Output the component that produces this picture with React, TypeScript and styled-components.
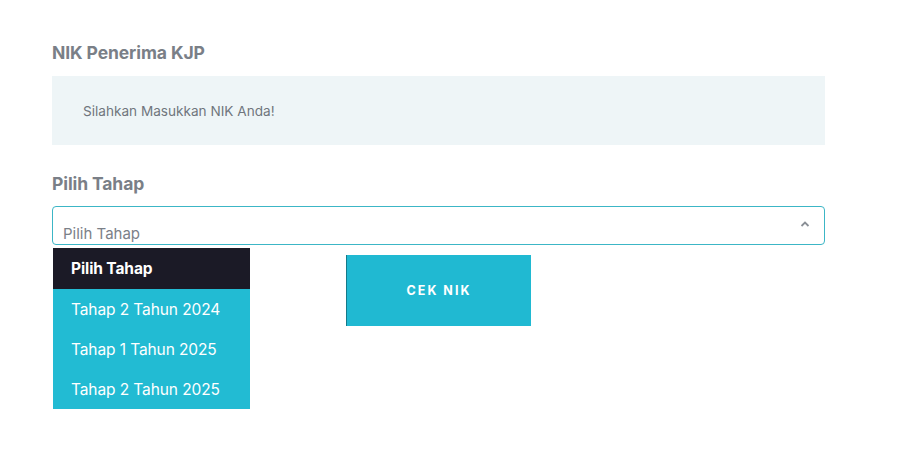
import React from "react";
import styled, { createGlobalStyle } from "styled-components";

const Global = createGlobalStyle`
  html, body { margin: 0; padding: 0; background: #ffffff; }
  body { font-family: Inter, "Open Sans", sans-serif; }
`;

const Page = styled.div`
  padding: 42px 0 0 52px;
  width: 825px;
  min-height: 449px;
  box-sizing: border-box;
`;

const Label = styled.div`
  font-size: 17.5px;
  font-weight: 700;
  color: #7a7f87;
  line-height: 21px;
  letter-spacing: -0.1px;
`;

const NikBox = styled.div`
  margin-top: 13px;
  height: 69px;
  background: #eef5f7;
  display: flex;
  align-items: center;
  padding-left: 31px;
  font-size: 13.6px;
  color: #70757d;
`;

const Section = styled.div`
  margin-top: 28px;
`;

const SelectWrap = styled.div`
  position: relative;
  z-index: 2;
  margin-top: 12px;
`;

const SelectBox = styled.div`
  height: 37px;
  border: 1px solid #3cb6c6;
  border-radius: 4px;
  box-sizing: content-box;
  display: flex;
  align-items: flex-end;
  justify-content: space-between;
  padding: 0 14px 0 10px;
  font-size: 15px;
  color: #7b8088;
`;

const SelectText = styled.span`
  line-height: 20px;
`;

const Caret = styled.svg`
  align-self: center;
  margin-top: -4px;
`;

const Menu = styled.ul`
  position: absolute;
  left: 1px;
  top: 42px;
  width: 197px;
  margin: 0;
  padding: 0;
  list-style: none;
  background: #22bbd3;
  z-index: 5;
`;

const Option = styled.li<{ $active?: boolean }>`
  height: ${(p) => (p.$active ? 41 : 40)}px;
  display: flex;
  align-items: center;
  padding-left: 18px;
  font-size: 15.5px;
  color: #ffffff;
  font-weight: ${(p) => (p.$active ? 700 : 400)};
  background: ${(p) => (p.$active ? "#1b1a26" : "transparent")};
  letter-spacing: -0.1px;
`;

const ButtonRow = styled.div`
  display: flex;
  justify-content: center;
  margin-top: 10px;
`;

const Button = styled.button`
  width: 185px;
  height: 71px;
  background: #20b9d2;
  border: none;
  border-left: 1px solid #157a8a;
  color: #ffffff;
  font-family: Inter, sans-serif;
  font-weight: 700;
  font-size: 12.5px;
  letter-spacing: 2px;
  cursor: pointer;
`;

export default function App() {
  return (
    <>
      <Global />
      <Page>
        <Label>NIK Penerima KJP</Label>
        <NikBox>Silahkan Masukkan NIK Anda!</NikBox>
        <Section>
          <Label>Pilih Tahap</Label>
          <SelectWrap>
            <SelectBox>
              <SelectText>Pilih Tahap</SelectText>
              <Caret width="10" height="6" viewBox="0 0 10 6">
                <path d="M1.5 5 L5 1.5 L8.5 5" fill="none" stroke="#8a8f96" strokeWidth="1.8" />
              </Caret>
            </SelectBox>
            <Menu>
              <Option $active>Pilih Tahap</Option>
              <Option>Tahap 2 Tahun 2024</Option>
              <Option>Tahap 1 Tahun 2025</Option>
              <Option>Tahap 2 Tahun 2025</Option>
            </Menu>
          </SelectWrap>
          <ButtonRow>
            <Button>CEK NIK</Button>
          </ButtonRow>
        </Section>
      </Page>
    </>
  );
}
